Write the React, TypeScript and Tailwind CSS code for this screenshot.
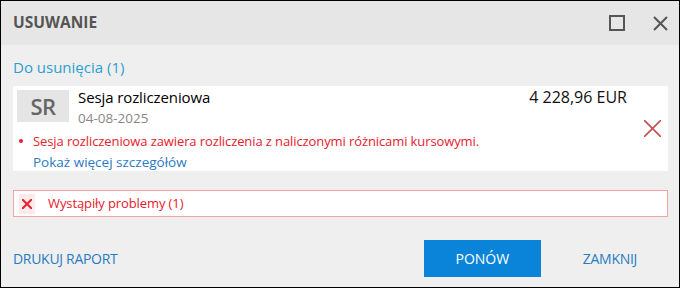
const font = { fontFamily: '"Open Sans", "Noto Sans", sans-serif' }

const Cross = ({ size, stroke, color, inset = 0 }: { size: number; stroke: number; color: string; inset?: number }) => (
    <svg width={size} height={size} viewBox={`0 0 ${size} ${size}`} className="shrink-0">
        <path
            d={`M${inset} ${inset}L${size - inset} ${size - inset}M${size - inset} ${inset}L${inset} ${size - inset}`}
            stroke={color}
            strokeWidth={stroke}
            fill="none"
        />
    </svg>
)

export default function App() {
    return (
        <div className="w-[682px] h-[289px] bg-white" style={font}>
            <div className="w-[680px] h-[288px] border border-black flex flex-col bg-[#efefef]">
                {/* Title bar */}
                <div className="h-[44px] shrink-0 bg-[#e6e6e6] flex items-center pl-3 pr-[11px]">
                    <h1 className="text-[15.5px] font-bold text-[#555] flex-1">USUWANIE</h1>
                    <div className="w-4 h-4 border-2 border-[#555] mr-[28px]" />
                    <Cross size={15} stroke={2} color="#555" inset={1} />
                </div>

                <div className="pl-3 pr-[11px] pt-3 flex flex-col">
                    <div className="text-[15px] leading-5 text-[#2ba0d2]">Do usunięcia (1)</div>

                    {/* Item card */}
                    <div className="mt-[9px] bg-white h-[85px] relative pl-1 pt-1">
                        <div className="flex">
                            <div className="w-[52px] h-[32px] bg-[#e5e5e5] text-[#666] text-[22px] font-semibold flex items-center justify-center tracking-[-0.5px]">
                                SR
                            </div>
                            <div className="ml-[9px] -mt-[2px] flex-1 flex flex-col">
                                <div className="flex justify-between items-baseline pr-[41px]">
                                    <span className="text-[15px] leading-[18px] text-black tracking-[-0.1px]">Sesja rozliczeniowa</span>
                                    <span className="text-[16px] leading-[18px] text-[#111]">4 228,96 EUR</span>
                                </div>
                                <span className="mt-[5px] text-[13.5px] leading-[15px] text-[#888]">04-08-2025</span>
                            </div>
                        </div>
                        <div className="mt-[7px] pl-[2px] flex items-center text-[13px] leading-[16px] text-[#e8202c] tracking-[-0.1px]">
                            <span className="w-1 h-1 rounded-full bg-[#e8202c] mr-[10px]" />
                            Sesja rozliczeniowa zawiera rozliczenia z naliczonymi różnicami kursowymi.
                        </div>
                        <div className="mt-[5px] pl-4 text-[13.5px] leading-[16px] text-[#2a7bc2]">
                            Pokaż więcej szczegółów
                        </div>
                        <div className="absolute right-[7px] top-[34px]">
                            <Cross size={17} stroke={1.6} color="#c4504b" />
                        </div>
                    </div>

                    {/* Problems bar */}
                    <div className="mt-[19px] h-[27px] border border-[#f2a3a3] bg-white flex items-center pl-[5px]">
                        <div className="w-[16px] h-[20px] bg-[#fdeaea] flex items-center justify-center">
                            <Cross size={10} stroke={2} color="#e8202c" />
                        </div>
                        <span className="ml-[13px] text-[13px] text-[#e8202c] tracking-[-0.1px]">Wystąpiły problemy (1)</span>
                    </div>

                    {/* Footer */}
                    <div className="mt-[23px] flex items-center">
                        <button className="text-[14px] text-[#2a7bc2] tracking-[-0.3px] flex-1 text-left">DRUKUJ RAPORT</button>
                        <button className="w-[117px] h-[37px] bg-[#0a84d8] text-white text-[14px]">PONÓW</button>
                        <button className="ml-[42px] mr-[31px] text-[14px] text-[#2a7bc2] tracking-[-0.3px]">ZAMKNIJ</button>
                    </div>
                </div>
            </div>
        </div>
    )
}
